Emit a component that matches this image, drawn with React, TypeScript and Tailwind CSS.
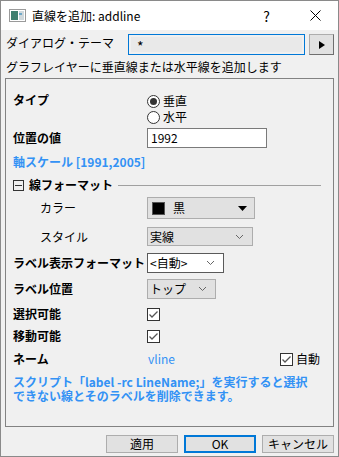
const jp = { fontFamily: '"Noto Sans CJK JP", "Noto Sans", sans-serif' };

function Radio({ checked, label }: { checked?: boolean; label: string }) {
  return (
    <div className="flex h-4 items-center gap-[3px]">
      <span className="flex h-[13px] w-[13px] items-center justify-center rounded-full border border-[#333] bg-white">
        {checked && <span className="h-[7px] w-[7px] rounded-full bg-[#333]" />}
      </span>
      <span>{label}</span>
    </div>
  );
}

function Check() {
  return (
    <span className="flex h-[13px] w-[13px] items-center justify-center border border-[#333] bg-white">
      <svg width="11" height="11" viewBox="0 0 11 11">
        <path d="M1.5 5.5 L4 8 L9.5 2.5" fill="none" stroke="#555" strokeWidth="1.3" />
      </svg>
    </span>
  );
}

function Chevron() {
  return (
    <svg width="9" height="6" viewBox="0 0 9 6">
      <path d="M1 1 L4.5 4.5 L8 1" fill="none" stroke="#666" strokeWidth="1" />
    </svg>
  );
}

function Row({ label, bold = true, indent = false, h, mt, children }: { label: string; bold?: boolean; indent?: boolean; h: number; mt: number; children?: React.ReactNode }) {
  return (
    <div className="flex items-center" style={{ height: h, marginTop: mt }}>
      <div className={`w-[134px] shrink-0 whitespace-nowrap ${bold ? "font-bold" : ""} ${indent ? "pl-[27px]" : ""}`}>{label}</div>
      {children}
    </div>
  );
}

export default function App() {
  return (
    <div className="flex h-[457px] w-[339px] flex-col border border-[#8a8a8a] bg-[#f0f0f0] text-[12px] leading-none text-black" style={jp}>
      {/* title bar */}
      <div className="flex h-[29px] shrink-0 items-center bg-white">
        <svg className="ml-[8px]" width="17" height="13" viewBox="0 0 17 13">
          <rect x="0.5" y="0.5" width="16" height="12" fill="#fff" stroke="#9a9a9a" />
          <rect x="2" y="2" width="7" height="9" fill="#3f7f6f" />
          <rect x="10" y="2" width="5" height="9" fill="#cfd8dc" />
          <rect x="10" y="4" width="3" height="2" fill="#6fa8c8" />
        </svg>
        <span className="ml-[6px] text-[12px]">直線を追加: addline</span>
        <span className="ml-auto mr-[40px] text-[14px]">?</span>
        <svg className="mr-[17px]" width="11" height="11" viewBox="0 0 11 11">
          <path d="M0.5 0.5 L10.5 10.5 M10.5 0.5 L0.5 10.5" stroke="#000" strokeWidth="1" />
        </svg>
      </div>

      <div className="flex flex-1 flex-col px-[4px]">
        {/* theme row */}
        <div className="mt-[4px] flex h-[21px] items-start">
          <span className="mt-[3px] w-[123px] pl-[1px]">ダイアログ・テーマ</span>
          <div className="h-[21px] w-[177px] border border-[#0078d7] bg-[#f0f0f0] p-[2px]">
            <div className="h-full w-full bg-[#e9e9e9] pl-[6px] pt-[2px] text-[14px]">*</div>
          </div>
          <button className="ml-[4px] flex h-[21px] w-[25px] items-center justify-center border border-[#adadad] border-b-[#6e6e6e] border-r-[#6e6e6e] bg-[#e1e1e1]">
            <svg width="6" height="8" viewBox="0 0 6 8"><path d="M0 0 L6 4 L0 8 Z" fill="#000" /></svg>
          </button>
        </div>
        <div className="mt-[6px] pl-[1px]">グラフレイヤーに垂直線または水平線を追加します</div>

        {/* group box */}
        <div className="mt-[5px] flex h-[349px] flex-col border border-[#828282] pl-[7px]">
          <div className="mt-[14px] flex">
            <div className="w-[134px] shrink-0 pt-[1px] font-bold">タイプ</div>
            <div className="flex flex-col">
              <Radio checked label="垂直" />
              <Radio label="水平" />
            </div>
          </div>
          <Row label="位置の値" h={20} mt={3}>
            <div className="flex h-[20px] w-[120px] items-center border border-[#7a7a7a] bg-white pl-[3px]">1992</div>
          </Row>
          <div className="mt-[3px] flex h-[22px] items-center font-bold text-[#3392f5]">軸スケール [1991,2005]</div>
          <div className="mt-[2px] flex h-[20px] items-center gap-[5px]">
            <span className="flex h-[11px] w-[11px] items-center justify-center border border-[#333]">
              <span className="h-px w-[7px] bg-[#333]" />
            </span>
            <span className="font-bold">線フォーマット</span>
            <span className="mr-[12px] h-px flex-1 bg-[#a0a0a0]" />
          </div>
          <Row label="カラー" bold={false} indent h={22} mt={2}>
            <div className="flex h-[22px] w-[108px] items-center border border-[#adadad] bg-[#e1e1e1] pl-[4px] pr-[7px]">
              <span className="h-[13px] w-[13px] border border-[#555] bg-black" />
              <span className="ml-[8px]">黒</span>
              <svg className="ml-auto" width="9" height="5" viewBox="0 0 9 5"><path d="M0 0 L9 0 L4.5 5 Z" fill="#000" /></svg>
            </div>
          </Row>
          <Row label="スタイル" bold={false} indent h={19} mt={8}>
            <div className="flex h-[19px] w-[106px] items-center border border-[#adadad] bg-[#e1e1e1] pl-[2px] pr-[8px]">
              <span>実線</span>
              <span className="ml-auto"><Chevron /></span>
            </div>
          </Row>
          <Row label="ラベル表示フォーマット" h={20} mt={7}>
            <div className="flex h-[20px] w-[77px] items-center border border-[#5a5a5a] bg-white pl-[2px] pr-[8px]">
              <span>&lt;自動&gt;</span>
              <span className="ml-auto"><Chevron /></span>
            </div>
          </Row>
          <Row label="ラベル位置" h={20} mt={6}>
            <div className="flex h-[20px] w-[69px] items-center border border-[#adadad] bg-[#e1e1e1] pl-[2px] pr-[8px]">
              <span>トップ</span>
              <span className="ml-auto"><Chevron /></span>
            </div>
          </Row>
          <Row label="選択可能" h={20} mt={5}>
            <Check />
          </Row>
          <Row label="移動可能" h={20} mt={2}>
            <Check />
          </Row>
          <Row label="ネーム" h={20} mt={3}>
            <span className="ml-[1px] font-normal text-[#3392f5]">vline</span>
            <span className="ml-auto mr-[13px] flex items-center gap-[3px]">
              <Check />
              <span>自動</span>
            </span>
          </Row>
          <div className="mt-[6px] pr-[18px] font-bold leading-[14px] text-[#3392f5]">
            スクリプト「label -rc LineName;」を実行すると選択できない線とそのラベルを削除できます。
          </div>
        </div>

        {/* buttons */}
        <div className="mt-[8px] flex justify-end gap-[6px]">
          <button className="h-[18px] w-[72px] border border-[#adadad] bg-[#e1e1e1] leading-none">適用</button>
          <button className="h-[18px] w-[72px] border-2 border-[#0078d7] bg-[#e1e1e1] leading-none">OK</button>
          <button className="h-[18px] w-[72px] border border-[#adadad] bg-[#e1e1e1] leading-none">キャンセル</button>
        </div>
      </div>
    </div>
  );
}
